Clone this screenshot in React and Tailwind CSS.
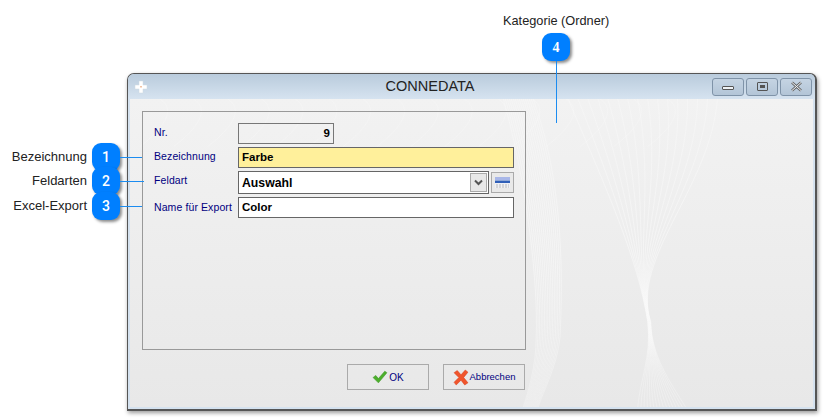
import React from 'react';

// Callout badge with its label and leader line
const Callout = ({ num, label, top, lineWidth }) => (
    <div className="absolute left-0 flex items-center z-10" style={{ top }}>
        <span className="w-[87px] text-right text-[13px] leading-[28px] text-[#222]">{label}</span>
        <span className="ml-[5px] w-[28px] h-[28px] rounded-[9px] bg-[#007fff] text-white text-[14px] [font-family:Roboto,sans-serif] font-medium flex items-center justify-center shadow-[2px_2px_3px_rgba(0,0,0,0.45)]">
            {num}
        </span>
        <span className="h-px bg-[#1c8cf0]" style={{ width: lineWidth }} />
    </div>
);

// Background wave of the dialog skin
const Swirl = () => {
    const lines = [];
    for (let i = 0; i < 16; i++) {
        lines.push(
            <path key={'a' + i} d={`M${440 + i * 10} 0 C${478 + i * 7} 90 ${510 - i * 0.5} 160 ${520 + i * 0.2} 225 C${524} 260 ${512 + i * 2} 285 ${510 + i * 3.2} 311`} />
        );
        lines.push(
            <path key={'b' + i} d={`M${375 + i * 2} 0 C${400 + i * 2.5} 90 ${410 + i * 1.6} 190 ${408 + i * 1.6} 240 C${408 + i * 1.4} 270 ${400 + i} 295 ${395 + i} 311`} />
        );
        lines.push(
            <path key={'c' + i} d={`M${30 + i * 34} 0 C${46 + i * 34} 10 ${36 + i * 34} 28 ${10 + i * 34} 48`} opacity="0.7" />
        );
    }
    return (
        <svg className="absolute inset-0 w-full h-full" viewBox="0 0 686 311" fill="none" stroke="url(#swirlFade)" strokeWidth="0.6" preserveAspectRatio="none">
            <defs>
                <linearGradient id="swirlFade" gradientUnits="userSpaceOnUse" x1="0" y1="0" x2="0" y2="311">
                    <stop offset="0" stopColor="#fbfbfb" stopOpacity="0.55" />
                    <stop offset="0.5" stopColor="#fbfbfb" stopOpacity="0.9" />
                    <stop offset="1" stopColor="#f8f8f8" stopOpacity="0.6" />
                </linearGradient>
            </defs>
            {lines}
        </svg>
    );
};

const Row = ({ label, labelClass, children }) => (
    <div className="flex items-start">
        <span className={`w-[84px] text-[10.5px] leading-[13px] tracking-[0.1px] text-[#000080] whitespace-nowrap ${labelClass}`}>{label}</span>
        {children}
    </div>
);

const inputClass = 'border border-[#666] h-[21px] px-[3px] flex items-center text-[11.5px] font-bold text-black';

const WinButton = ({ children }) => (
    <div className="w-[32px] h-[18px] rounded-[3px] border border-[#7f93a8] bg-gradient-to-b from-[#c5d4e3] to-[#b3c5d7] flex items-center justify-center">
        {children}
    </div>
);

const App = () => {
    return (
        <div className="relative w-[824px] h-[418px] bg-white overflow-hidden pl-[127px] pt-[73px] [font-family:'Liberation_Sans',Arial,sans-serif]">
            <div className="absolute left-[503px] top-[13px] text-[12.75px] leading-[15px] text-[#222]">Kategorie (Ordner)</div>
            <div className="absolute left-[542px] top-[33px] w-[28px] h-[28px] rounded-[9px] bg-[#007fff] text-white text-[14px] [font-family:'Liberation_Serif',serif] font-bold flex items-center justify-center shadow-[2px_2px_3px_rgba(0,0,0,0.45)] z-10">4</div>
            <div className="absolute left-[556px] top-[61px] w-px h-[62px] bg-[#1c8cf0] z-10" />

            <Callout num="1" label="Bezeichnung" top={143} lineWidth={22} />
            <Callout num="2" label="Feldarten" top={167} lineWidth={24} />
            <Callout num="3" label="Excel-Export" top={192} lineWidth={22} />

            {/* Window */}
            <div className="w-[690px] h-[338px] rounded-t-[7px] border border-[#555] border-b-2 border-r-2 shadow-[1px_2px_4px_rgba(0,0,0,0.4)] flex flex-col overflow-hidden bg-[#d5e2ef]">
                <div className="h-[25px] shrink-0 bg-gradient-to-b from-[#b9cbdc] to-[#d6e3f0] flex items-center pl-[6px] pr-[3px]">
                    <svg width="14" height="14" viewBox="0 0 14 14">
                        <path d="M5 1h4v4h4v4H9v4H5V9H1V5h4z" fill="#fff" stroke="#cfd9e3" strokeWidth="0.5" />
                        <rect x="6.5" y="6" width="1" height="1.5" fill="#e8874a" />
                    </svg>
                    <span className="flex-1 text-center text-[14.5px] text-[#222]">CONNEDATA</span>
                    <div className="flex gap-[2px]">
                        <WinButton><span className="w-[12px] h-[4px] border border-[#555] rounded-[1px] bg-[#eef2f6] mt-[3px]" /></WinButton>
                        <WinButton><span className="w-[11px] h-[9px] border border-[#555] rounded-[1px] flex items-center justify-center"><span className="w-[5px] h-[3px] bg-[#555]" /></span></WinButton>
                        <WinButton>
                            <svg width="13" height="11" viewBox="0 0 13 11">
                                <path d="M2 1.5l9 8M11 1.5l-9 8" stroke="#666" strokeWidth="2.6" />
                                <path d="M2 1.5l9 8M11 1.5l-9 8" stroke="#f0f3f6" strokeWidth="1" />
                            </svg>
                        </WinButton>
                    </div>
                </div>

                <div className="relative flex-1 mx-[2px] mb-[2px] bg-gradient-to-b from-[#f2f2f2] to-[#e8e8e8] pl-[12px] pt-[12px]">
                    <Swirl />
                    <div className="relative w-[384px] h-[239px] border border-[#999] pt-[11px] pl-[11px] flex flex-col">
                        <Row label="Nr." labelClass="pt-[3px]">
                            <div className={`${inputClass} w-[96px] justify-end border-[#777]`}>9</div>
                        </Row>
                        <Row label="Bezeichnung" labelClass="pt-[6px]">
                            <div className={`${inputClass} w-[276px] mt-[3px] bg-[#fff09b]`}>Farbe</div>
                        </Row>
                        <Row label="Feldart" labelClass="pt-[6px]">
                            <div className="flex mt-[3px] gap-[2px]">
                                <div className="w-[251px] h-[23px] border border-[#666] bg-white flex items-center justify-between pl-[3px] pr-px text-[12.25px] font-bold text-black">
                                    <span className="pt-[2px]">Auswahl</span>
                                    <span className="w-[17px] h-[19px] border border-[#aaa] bg-[#e8e8e8] flex items-center justify-center">
                                        <svg width="9" height="7" viewBox="0 0 9 7"><path d="M1 1.500l3.500 3.500 3.500-3.500" fill="none" stroke="#555" strokeWidth="2" /></svg>
                                    </span>
                                </div>
                                <div className="w-[23px] h-[21px] mt-px border border-[#aaa] bg-[#e9e9e9] flex items-center justify-center">
                                    <svg width="15" height="11" viewBox="0 0 15 11">
                                        <rect x="0" y="0" width="15" height="11" fill="#eef0f5" />
                                        <rect x="0" y="0" width="15" height="3" fill="#a9b7e8" />
                                        <rect x="0" y="3.500" width="15" height="2.500" fill="#2f5fb8" />
                                        <path d="M1 8h13M1 10h13" stroke="#aaa" strokeWidth="0.8" strokeDasharray="2 1" />
                                    </svg>
                                </div>
                            </div>
                        </Row>
                        <Row label="Name für Export" labelClass="pt-[7px]">
                            <div className={`${inputClass} w-[276px] mt-[3px] bg-white`}>Color</div>
                        </Row>
                    </div>
                    <div className="relative flex justify-end gap-[14px] mt-[14px] w-[383px]">
                        <div className="w-[82px] h-[26px] border border-[#aaa] flex items-center justify-center gap-px text-[10px] text-[#000080]">
                            <svg width="16" height="14" viewBox="0 0 15 13"><path d="M1 7l2.500-2 2.500 3 6-7 2 1.500-8 9.500z" fill="#4caf2c" stroke="#3a9421" strokeWidth="0.5" /></svg>
                            OK
                        </div>
                        <div className="w-[82px] h-[26px] border border-[#aaa] flex items-center justify-center gap-px text-[9.500px] text-[#000080]">
                            <svg width="16" height="17" viewBox="0 0 15 15"><path d="M1 3l3-2 3.500 4 4-4.500 2.500 2-4 5 4 5-3 2-3.500-4.500-4.500 4.500-2-2.500 4.500-4.500z" fill="#f0552c" stroke="#d93f1a" strokeWidth="0.5" /></svg>
                            Abbrechen
                        </div>
                    </div>
                </div>
            </div>
        </div>
    );
};

export default App;
